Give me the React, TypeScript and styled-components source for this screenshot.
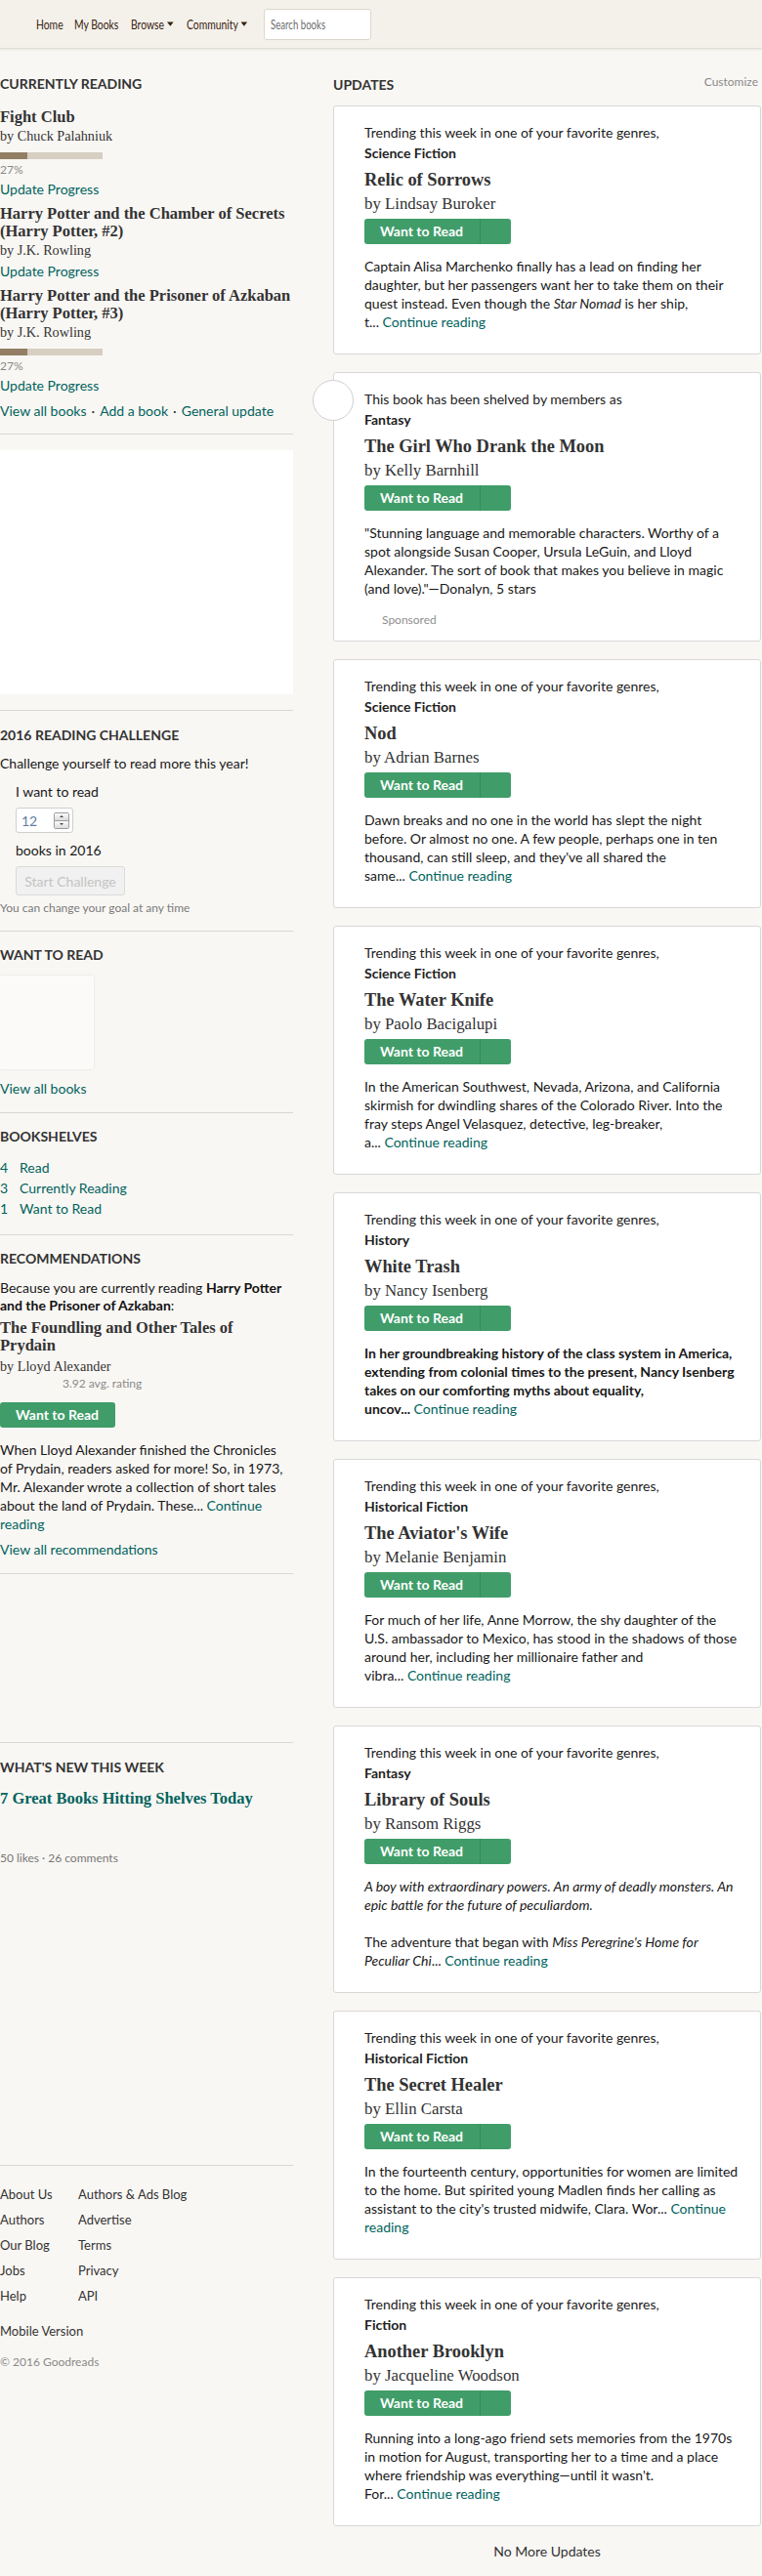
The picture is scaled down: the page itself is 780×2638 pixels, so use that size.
import React from "react";
import styled, { createGlobalStyle } from "styled-components";

const GlobalStyle = createGlobalStyle`
  html, body { margin: 0; padding: 0; background: #f9f7f4; }
  body { font-family: Lato, "Open Sans", sans-serif; font-size: 14px; color: #181818; }
  * { box-sizing: border-box; }
  a { text-decoration: none; }
`;

const SERIF = `"Liberation Serif", "Times New Roman", serif`;
const TEAL = "#00635d";

/* ---------- header ---------- */
const Header = styled.header`
  height: 50px;
  background: #f4f1ea;
  border-bottom: 1px solid #e2ddd2;
  box-shadow: 0 1px 2px rgba(0, 0, 0, 0.08);
  display: flex;
  align-items: center;
  padding-left: 37px;
`;
const Nav = styled.nav`
  display: flex;
  align-items: center;
  gap: 12px;
`;
const NavItem = styled.a<{ $w: number }>`
  display: block;
  width: ${(p) => p.$w}px;
  height: 20px;
  color: #382110;
`;
/* the reference uses a condensed face; Lato is narrowed to match */
const Condensed = styled.span<{ $size?: number }>`
  display: inline-flex;
  align-items: center;
  gap: 4px;
  white-space: nowrap;
  font-size: ${(p) => p.$size ?? 14}px;
  line-height: 20px;
  transform: scaleX(0.74);
  transform-origin: left center;
`;
const SearchBox = styled.div`
  margin-left: 17px;
  width: 110px;
  height: 32px;
  background: #fff;
  border: 1px solid #dcd6cc;
  border-radius: 3px;
  padding-left: 6px;
  display: flex;
  align-items: center;
  color: #6e6e6e;
`;

const Caret = () => (
  <svg width="9" height="5" viewBox="0 0 9 5">
    <path d="M0 0.5 L9 0.5 L4.5 4.8 Z" fill="#382110" />
  </svg>
);

/* ---------- layout ---------- */
const Main = styled.main`
  display: flex;
  align-items: flex-start;
  gap: 41px;
  padding-top: 26px;
`;
const LeftCol = styled.aside`
  width: 300px;
  flex: none;
`;
const RightCol = styled.section`
  width: 438px;
  flex: none;
`;

const Section = styled.section<{ $pt?: number; $pb?: number; $h?: number; $last?: boolean }>`
  padding: ${(p) => p.$pt ?? 15}px 0 ${(p) => p.$pb ?? 14}px;
  border-bottom: ${(p) => (p.$last ? "none" : "1px solid #d8d8d8")};
  ${(p) => (p.$h ? `height: ${p.$h}px;` : "")}
`;
const SectionTitle = styled.h2`
  margin: 0;
  font-size: 14px;
  line-height: 20px;
  font-weight: 700;
  text-transform: uppercase;
  color: #333;
`;

/* ---------- left column parts ---------- */
const BookList = styled.div`
  margin-top: 15px;
`;
const BookItem = styled.div`
  margin-bottom: 6px;
`;
const SideTitle = styled.div<{ $teal?: boolean; $mt?: number; $lh?: number }>`
  margin-top: ${(p) => p.$mt ?? 0}px;
  font-family: ${SERIF};
  font-weight: 700;
  font-size: 16.5px;
  line-height: ${(p) => p.$lh ?? 18}px;
  color: ${(p) => (p.$teal ? TEAL : "#333")};
`;
const SideBy = styled.div<{ $mt?: number }>`
  margin-top: ${(p) => p.$mt ?? 0}px;
  font-family: ${SERIF};
  font-size: 14.2px;
  line-height: 20px;
  color: #333;
`;
const Track = styled.div`
  margin-top: 7px;
  width: 105px;
  height: 7px;
  background: #d6cfc2;
`;
const Fill = styled.div`
  height: 100%;
  background: #927f64;
`;
const Small = styled.div<{ $mt?: number; $ml?: number; $color?: string }>`
  margin-top: ${(p) => p.$mt ?? 0}px;
  margin-left: ${(p) => p.$ml ?? 0}px;
  font-size: 12px;
  line-height: 16px;
  color: ${(p) => p.$color ?? "#888"};
`;
const LinkLine = styled.div<{ $mt?: number }>`
  margin-top: ${(p) => p.$mt ?? 0}px;
  font-size: 14px;
  line-height: 20px;
  color: #333;
`;
const TealLink = styled.a`
  color: ${TEAL};
`;
const Dot = styled.span`
  margin: 0 5px;
  color: #333;
`;
const AdBox = styled.div`
  width: 300px;
  height: 250px;
  background: #fff;
`;
const Para = styled.p<{ $mt?: number; $lh?: number; $w?: number }>`
  margin: ${(p) => p.$mt ?? 0}px 0 0;
  ${(p) => (p.$w ? `max-width: ${p.$w}px;` : "")}
  font-size: 14px;
  line-height: ${(p) => p.$lh ?? 20}px;
  color: #181818;
`;
const ChallengeForm = styled.div`
  padding-left: 16px;
`;
const NumberBox = styled.div`
  margin-top: 6px;
  width: 59px;
  height: 26px;
  background: #fff;
  border: 1px solid #cfcfcf;
  border-radius: 3px;
  display: flex;
  align-items: center;
  justify-content: space-between;
  padding: 0 3px 0 5px;
  font-size: 14px;
  color: #5f7e9e;
`;
const Spinner = styled.div`
  width: 16px;
  height: 17px;
  border: 1px solid #9d9d9d;
  border-radius: 2px;
  display: flex;
  flex-direction: column;
  overflow: hidden;
`;
const SpinHalf = styled.div<{ $down?: boolean }>`
  flex: 1;
  display: flex;
  align-items: center;
  justify-content: center;
  background: linear-gradient(#fbfbfb, #dcdcdc);
  border-top: ${(p) => (p.$down ? "1px solid #9d9d9d" : "none")};
  &::after {
    content: "";
    border-left: 2px solid transparent;
    border-right: 2px solid transparent;
    ${(p) => (p.$down ? "border-top: 2px solid #444;" : "border-bottom: 2px solid #444;")}
  }
`;
const GhostButton = styled.button`
  display: block;
  margin-top: 6px;
  width: 112px;
  height: 30px;
  background: #f1f1f1;
  border: 1px solid #dadada;
  border-radius: 3px;
  font-family: Lato, sans-serif;
  font-size: 14px;
  color: #c4c4c4;
  padding: 0;
`;
const CoverSlot = styled.div`
  margin-top: 11px;
  width: 96px;
  height: 96px;
  background: #fbfaf8;
  box-shadow: 0 0 2px rgba(0, 0, 0, 0.12);
`;
const ShelfRows = styled.div`
  margin-top: 11px;
  display: grid;
  grid-template-columns: 20px 1fr;
  font-size: 14px;
  line-height: 21px;
  color: ${TEAL};
`;
const Bold = styled.b`
  font-weight: 700;
  color: #111;
`;

/* ---------- shelf button ---------- */
const ShelfButton = styled.div<{ $split?: boolean; $mt?: number }>`
  margin-top: ${(p) => p.$mt ?? 0}px;
  width: ${(p) => (p.$split ? 150 : 118)}px;
  height: 26px;
  border-radius: 3px;
  background: #409d69;
  display: flex;
`;
const ShelfLabel = styled.span`
  width: 118px;
  flex: none;
  padding-left: 16px;
  font-size: 14px;
  font-weight: 700;
  line-height: 26px;
  color: #fff;
`;
const ShelfDrop = styled.span`
  flex: 1;
  border-left: 1px solid #378a5b;
`;

/* ---------- right column parts ---------- */
const UpdatesHead = styled.div`
  display: flex;
  justify-content: space-between;
  align-items: flex-start;
  height: 20px;
  padding-top: 1px;
`;
const Customize = styled.a`
  font-size: 12px;
  line-height: 14px;
  color: #8a8a8a;
  margin-right: 3px;
`;
const Cards = styled.div`
  margin-top: 12px;
  display: flex;
  flex-direction: column;
  gap: 18px;
`;
const Card = styled.article<{ $sponsored?: boolean }>`
  position: relative;
  background: #fff;
  border: 1px solid #d8d8d8;
  border-radius: 3px;
  padding: 16px 21px ${(p) => (p.$sponsored ? 13 : 23)}px 31px;
`;
const Avatar = styled.div`
  position: absolute;
  left: -22px;
  top: 7px;
  width: 42px;
  height: 42px;
  border-radius: 50%;
  background: #fff;
  border: 1px solid #d0d0d0;
`;
const Intro = styled.div`
  font-size: 14px;
  line-height: 21px;
  color: #222;
`;
const Genre = styled.div`
  font-size: 14px;
  line-height: 21px;
  font-weight: 700;
  color: #222;
`;
const CardTitle = styled.div`
  margin-top: 5px;
  font-family: ${SERIF};
  font-weight: 700;
  font-size: 18.4px;
  line-height: 24px;
  color: #333;
`;
const CardBy = styled.div`
  margin-top: 2px;
  font-family: ${SERIF};
  font-size: 16.8px;
  line-height: 22px;
  color: #333;
`;
const Desc = styled.div<{ $bold?: boolean }>`
  margin-top: 13px;
  font-size: 14px;
  line-height: 19px;
  color: #181818;
  font-weight: ${(p) => (p.$bold ? 700 : 400)};
  a { font-weight: 400; }
`;
const Sponsored = styled.div`
  margin: 15px 0 0 18px;
  font-size: 12px;
  line-height: 16px;
  color: #8f8f8f;
`;
const NoMore = styled.div`
  margin: 16px 0 0;
  padding-bottom: 15px;
  text-align: center;
  font-size: 14px;
  line-height: 20px;
  color: #333;
`;

/* ---------- footer ---------- */
const FooterGrid = styled.div`
  margin-top: 16px;
  display: grid;
  grid-template-columns: 80px 1fr;
  font-size: 13px;
  line-height: 26px;
  color: #333;
`;
const FooterLine = styled.div<{ $mt: number }>`
  margin-top: ${(p) => p.$mt}px;
  font-size: 13px;
  line-height: 20px;
  color: #333;
`;

/* ---------- data ---------- */
type Update = {
  intro: string;
  genre: string;
  title: string;
  author: string;
  desc: React.ReactNode;
  bold?: boolean;
  sponsored?: boolean;
};

const More = () => <TealLink href="#">Continue reading</TealLink>;

const updates: Update[] = [
  {
    intro: "Trending this week in one of your favorite genres,",
    genre: "Science Fiction",
    title: "Relic of Sorrows",
    author: "by Lindsay Buroker",
    desc: (
      <>
        Captain Alisa Marchenko finally has a lead on finding her daughter, but her passengers want her to take
        them on their quest instead. Even though the <i>Star Nomad</i> is her ship,
        <br />
        t... <More />
      </>
    ),
  },
  {
    intro: "This book has been shelved by members as",
    genre: "Fantasy",
    title: "The Girl Who Drank the Moon",
    author: "by Kelly Barnhill",
    sponsored: true,
    desc: (
      <>
        "Stunning language and memorable characters. Worthy of a spot alongside Susan Cooper, Ursula LeGuin, and
        Lloyd Alexander. The sort of book that makes you believe in magic (and love)."—Donalyn, 5 stars
      </>
    ),
  },
  {
    intro: "Trending this week in one of your favorite genres,",
    genre: "Science Fiction",
    title: "Nod",
    author: "by Adrian Barnes",
    desc: (
      <>
        Dawn breaks and no one in the world has slept the night
        <br />
        before. Or almost no one. A few people, perhaps one in ten thousand, can still sleep, and they've all
        shared the
        <br />
        same... <More />
      </>
    ),
  },
  {
    intro: "Trending this week in one of your favorite genres,",
    genre: "Science Fiction",
    title: "The Water Knife",
    author: "by Paolo Bacigalupi",
    desc: (
      <>
        In the American Southwest, Nevada, Arizona, and California skirmish for dwindling shares of the Colorado
        River. Into the fray steps Angel Velasquez, detective, leg-breaker,
        <br />
        a... <More />
      </>
    ),
  },
  {
    intro: "Trending this week in one of your favorite genres,",
    genre: "History",
    title: "White Trash",
    author: "by Nancy Isenberg",
    bold: true,
    desc: (
      <>
        In her groundbreaking history of the class system in America, extending from colonial times to the
        present, Nancy Isenberg takes on our comforting myths about equality,
        <br />
        uncov... <More />
      </>
    ),
  },
  {
    intro: "Trending this week in one of your favorite genres,",
    genre: "Historical Fiction",
    title: "The Aviator's Wife",
    author: "by Melanie Benjamin",
    desc: (
      <>
        For much of her life, Anne Morrow, the shy daughter of the
        <br />
        U.S. ambassador to Mexico, has stood in the shadows of those around her, including her millionaire father
        and
        <br />
        vibra... <More />
      </>
    ),
  },
  {
    intro: "Trending this week in one of your favorite genres,",
    genre: "Fantasy",
    title: "Library of Souls",
    author: "by Ransom Riggs",
    desc: (
      <>
        <i>
          A boy with extraordinary powers. An army of deadly monsters. An epic battle for the future of
          peculiardom.
        </i>
        <br />
        <br />
        The adventure that began with <i>Miss Peregrine's Home for Peculiar Chi</i>... <More />
      </>
    ),
  },
  {
    intro: "Trending this week in one of your favorite genres,",
    genre: "Historical Fiction",
    title: "The Secret Healer",
    author: "by Ellin Carsta",
    desc: (
      <>
        In the fourteenth century, opportunities for women are limited to the home. But spirited young Madlen
        finds her calling as assistant to the city's trusted midwife, Clara. Wor... <More />
      </>
    ),
  },
  {
    intro: "Trending this week in one of your favorite genres,",
    genre: "Fiction",
    title: "Another Brooklyn",
    author: "by Jacqueline Woodson",
    desc: (
      <>
        Running into a long-ago friend sets memories from the 1970s in motion for August, transporting her to a
        time and a place where friendship was everything—until it wasn't.
        <br />
        For... <More />
      </>
    ),
  },
];

type Reading = { title: string; author: string; progress?: number };
const reading: Reading[] = [
  { title: "Fight Club", author: "by Chuck Palahniuk", progress: 27 },
  { title: "Harry Potter and the Chamber of Secrets (Harry Potter, #2)", author: "by J.K. Rowling" },
  { title: "Harry Potter and the Prisoner of Azkaban (Harry Potter, #3)", author: "by J.K. Rowling", progress: 27 },
];

const footerLinks = [
  ["About Us", "Authors & Ads Blog"],
  ["Authors", "Advertise"],
  ["Our Blog", "Terms"],
  ["Jobs", "Privacy"],
  ["Help", "API"],
];

const navItems: { label: string; w: number; menu?: boolean }[] = [
  { label: "Home", w: 27 },
  { label: "My Books", w: 46 },
  { label: "Browse", w: 45, menu: true },
  { label: "Community", w: 62, menu: true },
];

export default function App() {
  return (
    <>
      <GlobalStyle />
      <Header>
        <Nav>
          {navItems.map((n) => (
            <NavItem key={n.label} href="#" $w={n.w}>
              <Condensed>
                {n.label}
                {n.menu && <Caret />}
              </Condensed>
            </NavItem>
          ))}
        </Nav>
        <SearchBox>
          <Condensed $size={13}>Search books</Condensed>
        </SearchBox>
      </Header>

      <Main>
        <LeftCol>
          <Section $pt={0} $pb={13}>
            <SectionTitle>Currently Reading</SectionTitle>
            <BookList>
              {reading.map((b, i) => (
                <BookItem key={i}>
                  <SideTitle>{b.title}</SideTitle>
                  <SideBy>{b.author}</SideBy>
                  {b.progress !== undefined && (
                    <>
                      <Track>
                        <Fill style={{ width: `${b.progress}%` }} />
                      </Track>
                      <Small $mt={3}>{b.progress}%</Small>
                    </>
                  )}
                  <LinkLine $mt={2}>
                    <TealLink href="#">Update Progress</TealLink>
                  </LinkLine>
                </BookItem>
              ))}
            </BookList>
            <LinkLine>
              <TealLink href="#">View all books</TealLink>
              <Dot>·</Dot>
              <TealLink href="#">Add a book</TealLink>
              <Dot>·</Dot>
              <TealLink href="#">General update</TealLink>
            </LinkLine>
          </Section>

          <Section $pt={16} $pb={16}>
            <AdBox />
          </Section>

          <Section $pt={15} $pb={15}>
            <SectionTitle>2016 Reading Challenge</SectionTitle>
            <Para $mt={9}>Challenge yourself to read more this year!</Para>
            <ChallengeForm>
              <Para $mt={9}>I want to read</Para>
              <NumberBox>
                12
                <Spinner>
                  <SpinHalf />
                  <SpinHalf $down />
                </Spinner>
              </NumberBox>
              <Para $mt={8}>books in 2016</Para>
              <GhostButton>Start Challenge</GhostButton>
            </ChallengeForm>
            <Small $mt={5} $color="#7a7a7a">
              You can change your goal at any time
            </Small>
          </Section>

          <Section $pt={14} $pb={14}>
            <SectionTitle>Want to Read</SectionTitle>
            <CoverSlot />
            <LinkLine $mt={10}>
              <TealLink href="#">View all books</TealLink>
            </LinkLine>
          </Section>

          <Section $pt={14} $pb={16}>
            <SectionTitle>Bookshelves</SectionTitle>
            <ShelfRows>
              <span>4</span>
              <TealLink href="#">Read</TealLink>
              <span>3</span>
              <TealLink href="#">Currently Reading</TealLink>
              <span>1</span>
              <TealLink href="#">Want to Read</TealLink>
            </ShelfRows>
          </Section>

          <Section $pt={14} $pb={14}>
            <SectionTitle>Recommendations</SectionTitle>
            <Para $mt={11} $lh={18}>
              Because you are currently reading <Bold>Harry Potter and the Prisoner of Azkaban</Bold>:
            </Para>
            <SideTitle $mt={5}>
              The Foundling and Other Tales of
              <br />
              Prydain
            </SideTitle>
            <SideBy $mt={2}>by Lloyd Alexander</SideBy>
            <Small $ml={64} $color="#8a8a8a">
              3.92 avg. rating
            </Small>
            <ShelfButton $mt={11}>
              <ShelfLabel>Want to Read</ShelfLabel>
            </ShelfButton>
            <Para $mt={13} $lh={19} $w={294}>
              When Lloyd Alexander finished the Chronicles of Prydain, readers asked for more! So, in 1973, Mr.
              Alexander wrote a collection of short tales about the land of Prydain. These...{" "}
              <TealLink href="#">Continue reading</TealLink>
            </Para>
            <LinkLine $mt={7}>
              <TealLink href="#">View all recommendations</TealLink>
            </LinkLine>
          </Section>

          <Section $pt={0} $pb={0} $h={173} />

          <Section $pt={15} $pb={306}>
            <SectionTitle>What's New This Week</SectionTitle>
            <SideTitle $teal $mt={11} $lh={22}>
              7 Great Books Hitting Shelves Today
            </SideTitle>
            <Small $mt={42} $color="#777">
              50 likes · 26 comments
            </Small>
          </Section>

          <Section $pt={0} $pb={0} $last>
            <FooterGrid>
              {footerLinks.map(([a, b]) => (
                <React.Fragment key={a}>
                  <span>{a}</span>
                  <span>{b}</span>
                </React.Fragment>
              ))}
            </FooterGrid>
            <FooterLine $mt={13}>Mobile Version</FooterLine>
            <Small $mt={14} $color="#8a8a8a">
              © 2016 Goodreads
            </Small>
          </Section>
        </LeftCol>

        <RightCol>
          <UpdatesHead>
            <SectionTitle>Updates</SectionTitle>
            <Customize href="#">Customize</Customize>
          </UpdatesHead>
          <Cards>
            {updates.map((u) => (
              <Card key={u.title} $sponsored={u.sponsored}>
                {u.sponsored && <Avatar />}
                <Intro>{u.intro}</Intro>
                <Genre>{u.genre}</Genre>
                <CardTitle>{u.title}</CardTitle>
                <CardBy>{u.author}</CardBy>
                <ShelfButton $split $mt={4}>
                  <ShelfLabel>Want to Read</ShelfLabel>
                  <ShelfDrop />
                </ShelfButton>
                <Desc $bold={u.bold}>{u.desc}</Desc>
                {u.sponsored && <Sponsored>Sponsored</Sponsored>}
              </Card>
            ))}
          </Cards>
          <NoMore>No More Updates</NoMore>
        </RightCol>
      </Main>
    </>
  );
}
